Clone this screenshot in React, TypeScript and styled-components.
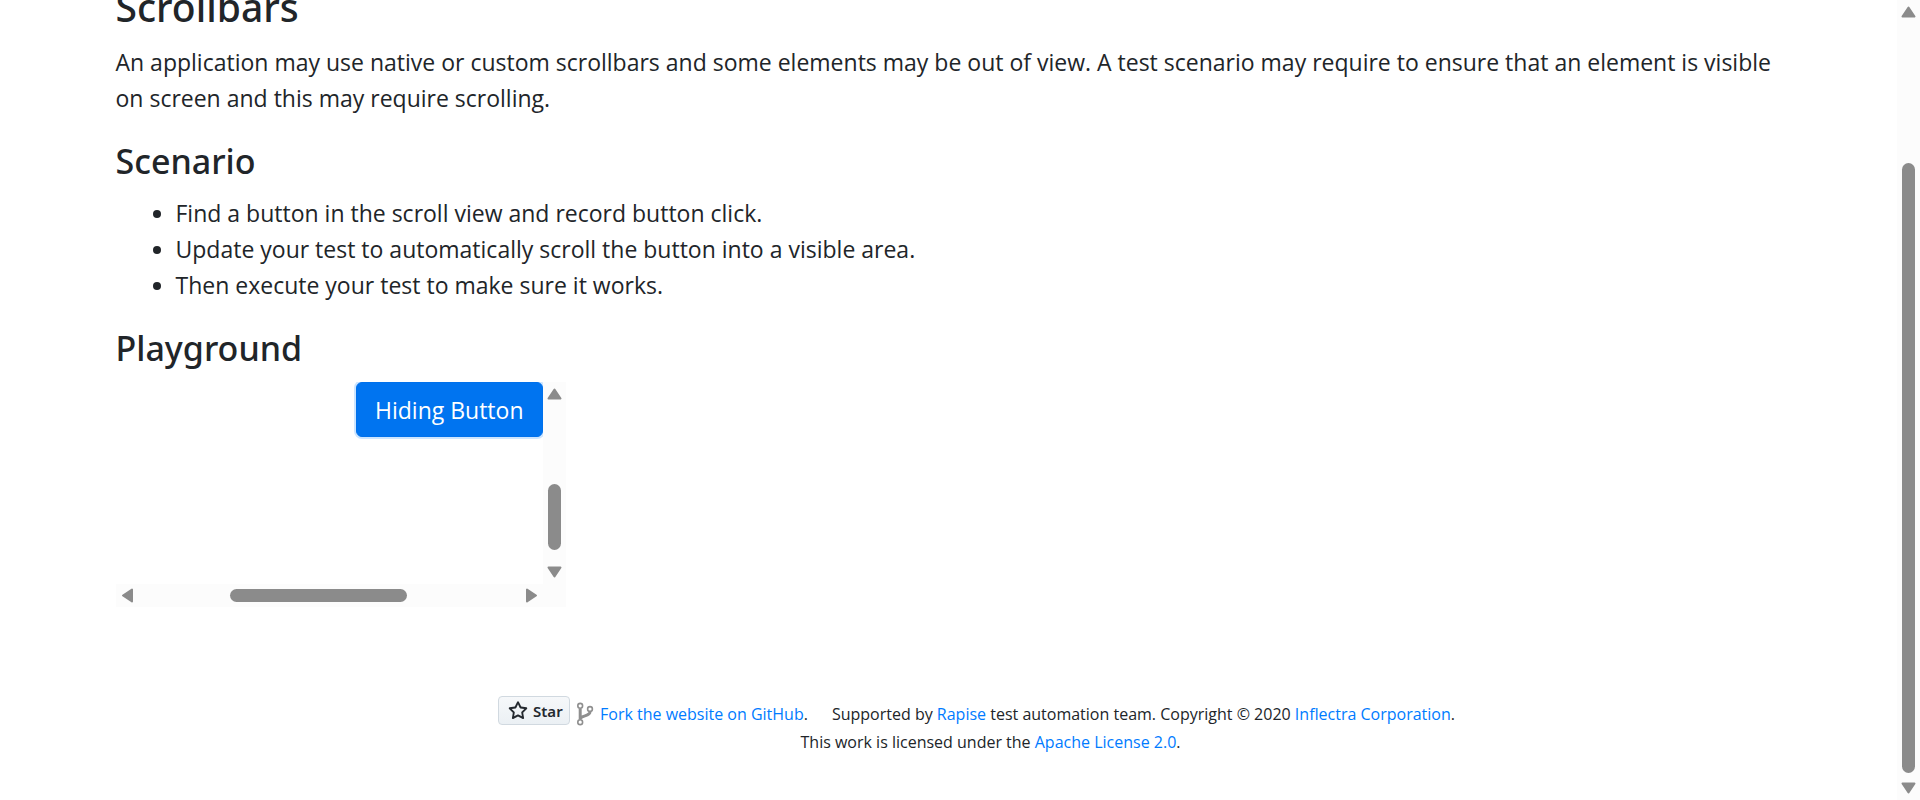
import React from 'react';
import styled, { createGlobalStyle, css } from 'styled-components';

const GlobalStyle = createGlobalStyle`
  *, *::before, *::after { box-sizing: border-box; }
  html, body, #root { height: 100%; }
  body {
    margin: 0;
    overflow: hidden;
    color: #212529;
    background: #fff;
    font-family: 'Open Sans', 'Noto Sans', sans-serif;
    font-size: 23px;
    line-height: 36px;
  }
`;

const Page = styled.div`
  display: flex;
  height: 100%;
`;

const Viewport = styled.div`
  flex: 1;
  min-width: 0;
  overflow: hidden;
`;

const Container = styled.main`
  max-width: 1710px;
  margin: -18px auto 0;
  padding: 0 22px;
`;

const Title = styled.h3`
  margin: 0 0 12px;
  font: 500 39px/50px 'Noto Sans', sans-serif;
`;

const Heading = styled.h4`
  margin: 0 0 12px;
  font: 500 34px/43px 'Noto Sans', sans-serif;
`;

const Paragraph = styled.p`
  margin: 0 0 24px;
`;

const List = styled.ul`
  margin: 0 0 24px;
  padding-left: 60px;
`;

const ScrollView = styled.div`
  display: grid;
  grid-template: 1fr 23px / 1fr 23px;
  width: 450px;
  max-width: 100%;
  height: 225px;
`;

const ScrollContent = styled.div`
  display: flex;
  justify-content: flex-end;
  align-items: flex-start;
  overflow: hidden;
`;

const PrimaryButton = styled.button`
  height: 55px;
  padding: 0 18px;
  border: 1px solid #0071ec;
  border-radius: 6px;
  color: #fff;
  background: #0074f0;
  box-shadow: 0 0 0 2px #cce5ff;
  font: inherit;
  cursor: pointer;
`;

const Bar = styled.div<{ $horizontal?: boolean }>`
  display: flex;
  flex: none;
  flex-direction: ${p => (p.$horizontal ? 'row' : 'column')};
  align-items: center;
  background: #fcfcfc;
  ${p => !p.$horizontal && css`width: 23px;`}
`;

const Corner = styled.div`
  background: #fcfcfc;
`;

const ArrowButton = styled.button`
  display: flex;
  flex: none;
  align-items: center;
  justify-content: center;
  width: 23px;
  height: 23px;
  padding: 0;
  border: 0;
  background: none;
`;

const Track = styled.div<{ $grow: number }>`
  flex: ${p => p.$grow} 1 0;
`;

const Thumb = styled(Track)<{ $horizontal?: boolean }>`
  ${p => (p.$horizontal ? css`height: 13px;` : css`width: 13px;`)}
  border-radius: 7px;
  background: #8b8b8b;
`;

const Footer = styled.footer`
  display: flex;
  flex-direction: column;
  align-items: center;
  margin-top: 89px;
  padding-left: 84px;
  font-size: 16px;
  line-height: 28px;
`;

const FooterLine = styled.div`
  display: flex;
  align-items: flex-start;
  padding-right: 28px;
`;

const FooterText = styled.span<{ $gap?: number }>`
  margin-left: ${p => p.$gap ?? 0}px;
  padding-top: 4px;
  white-space: nowrap;
`;

const Link = styled.a`
  color: #007bff;
  text-decoration: none;
`;

const StarLink = styled.a`
  display: flex;
  align-items: center;
  gap: 5px;
  width: 72px;
  height: 29px;
  margin-right: 6px;
  padding-left: 9px;
  border: 1px solid #d1d9e0;
  border-radius: 4px;
  color: #24292f;
  background: linear-gradient(#f6f8fa, #ebf0f4);
  font: 600 15px/28px 'Noto Sans', sans-serif;
  text-decoration: none;
`;

const ForkIcon = styled.svg`
  flex: none;
  width: 18px;
  height: 24px;
  margin-top: 6px;
`;

const arrows = {
  up: 'M11.5 7.5 L17.5 16.5 H5.5 Z',
  down: 'M11.5 15.5 L17.5 6.5 H5.5 Z',
  left: 'M7 11.5 L16 5.5 V17.5 Z',
  right: 'M16 11.5 L7 5.5 V17.5 Z',
};

const Arrow = ({ to }: { to: keyof typeof arrows }) => (
  <ArrowButton aria-label={`Scroll ${to}`}>
    <svg width="23" height="23" aria-hidden="true">
      <path d={arrows[to]} fill="#8b8b8b" stroke="#8b8b8b" strokeWidth="2" strokeLinejoin="round" />
    </svg>
  </ArrowButton>
);

type ScrollbarProps = { before: number; thumb: number; after: number; horizontal?: boolean };

const Scrollbar = ({ before, thumb, after, horizontal }: ScrollbarProps) => (
  <Bar $horizontal={horizontal}>
    <Arrow to={horizontal ? 'left' : 'up'} />
    <Track $grow={before} />
    <Thumb $grow={thumb} $horizontal={horizontal} />
    <Track $grow={after} />
    <Arrow to={horizontal ? 'right' : 'down'} />
  </Bar>
);

export default function App() {
  return (
    <>
      <GlobalStyle />
      <Page>
        <Viewport>
          <Container>
            <Title>Scrollbars</Title>
            <Paragraph>
              An application may use native or custom scrollbars and some elements may be out of view. A test
              scenario may require to ensure that an element is visible on screen and this may require scrolling.
            </Paragraph>
            <Heading>Scenario</Heading>
            <List>
              <li>Find a button in the scroll view and record button click.</li>
              <li>Update your test to automatically scroll the button into a visible area.</li>
              <li>Then execute your test to make sure it works.</li>
            </List>
            <Heading>Playground</Heading>
            <ScrollView>
              <ScrollContent>
                <PrimaryButton>Hiding Button</PrimaryButton>
              </ScrollContent>
              <Scrollbar before={79} thumb={66} after={11} />
              <Scrollbar before={91} thumb={177} after={113} horizontal />
              <Corner />
            </ScrollView>
            <Footer>
              <FooterLine>
                <StarLink href="#star">
                  <svg width="20" height="20" viewBox="0 0 16 16" fill="#24292f" aria-hidden="true">
                    <path d="M8 .25a.75.75 0 0 1 .673.418l1.882 3.815 4.21.612a.75.75 0 0 1 .416 1.279l-3.046 2.97.719 4.192a.751.751 0 0 1-1.088.791L8 12.347l-3.766 1.98a.75.75 0 0 1-1.088-.79l.72-4.194L.818 6.374a.75.75 0 0 1 .416-1.28l4.21-.611L7.327.668A.75.75 0 0 1 8 .25Zm0 2.445L6.615 5.5a.75.75 0 0 1-.564.41l-3.097.45 2.24 2.184a.75.75 0 0 1 .216.664l-.528 3.084 2.769-1.456a.75.75 0 0 1 .698 0l2.77 1.456-.53-3.084a.75.75 0 0 1 .216-.664l2.24-2.183-3.096-.45a.75.75 0 0 1-.564-.41L8 2.694Z" />
                  </svg>
                  Star
                </StarLink>
                <ForkIcon viewBox="0 0 18 24" fill="none" stroke="#8f8f8f" aria-hidden="true">
                  <circle cx="4.2" cy="3.8" r="2.4" strokeWidth="1.6" />
                  <circle cx="4.2" cy="20.2" r="2.4" strokeWidth="1.6" />
                  <circle cx="14" cy="7" r="2.4" strokeWidth="1.6" />
                  <path d="M4.2 6.6v10.8M14 9.8c0 4.8-8.8 3.2-9.6 7" strokeWidth="3" />
                </ForkIcon>
                <FooterText $gap={6}>
                  <Link href="#fork">Fork the website on GitHub</Link>.
                </FooterText>
                <FooterText $gap={24}>
                  Supported by <Link href="#rapise">Rapise</Link> test automation team. Copyright © 2020{' '}
                  <Link href="#inflectra">Inflectra Corporation</Link>.
                </FooterText>
              </FooterLine>
              <div>
                This work is licensed under the <Link href="#license">Apache License 2.0</Link>.
              </div>
            </Footer>
          </Container>
        </Viewport>
        <Scrollbar before={140} thumb={610} after={4} />
      </Page>
    </>
  );
}
